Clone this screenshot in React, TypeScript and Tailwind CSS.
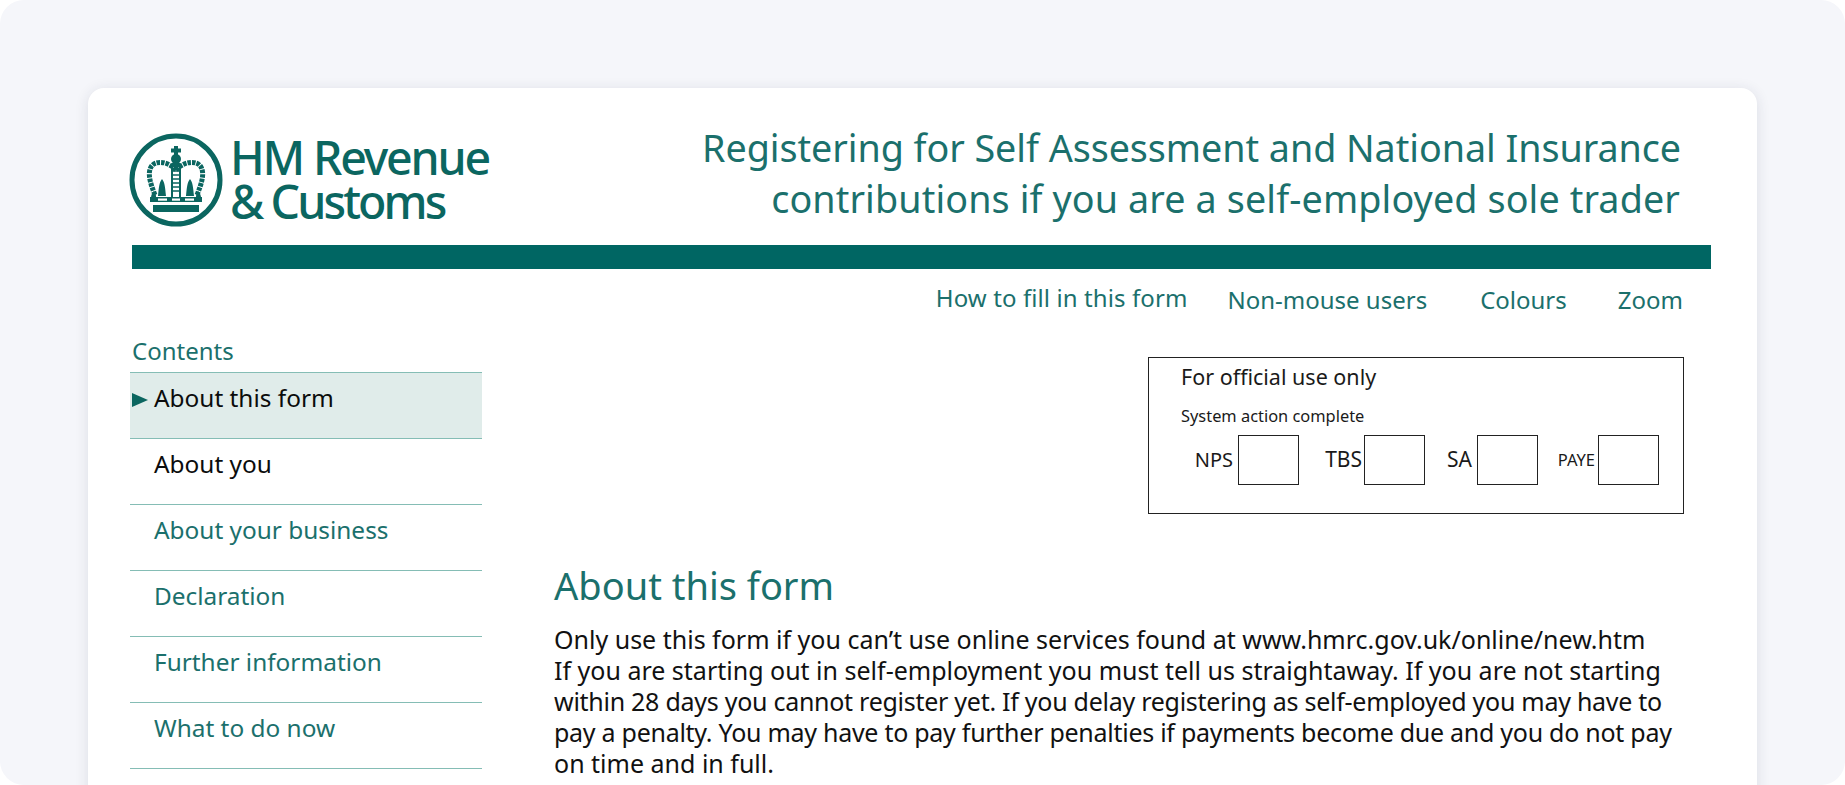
const navItems = [
  { label: "About this form", cls: "text-[#0b0c0c] bg-[#e0ecea]", active: true },
  { label: "About you", cls: "text-[#0b0c0c]" },
  { label: "About your business", cls: "text-[#1b706c]" },
  { label: "Declaration", cls: "text-[#1b706c]" },
  { label: "Further information", cls: "text-[#1b706c]" },
  { label: "What to do now", cls: "text-[#1b706c]" },
]

function OfficeBox({ label, className, labelClass }: { label: string, className?: string, labelClass: string }) {
  return <div className={`flex items-center justify-end ${className ?? ""}`}>
    <span className={labelClass}>{label}</span>
    <div className="w-[61px] h-[50px] flex-none border border-[#222]" />
  </div>
}

function Crown() {
  return <svg viewBox="0 0 94 94" className="w-[94px] h-[94px] flex-none mt-[1px]">
    <circle cx="47" cy="47" r="44" fill="none" stroke="#0b6660" strokeWidth="5" />
    <g fill="none" stroke="#0b6660">
      <path d="M47 37C39 28 26 27 22 34C18 41 22 52 26 62" strokeWidth="5" strokeDasharray="3.5 1" />
      <path d="M47 37C55 28 68 27 72 34C76 41 72 52 68 62" strokeWidth="5" strokeDasharray="3.5 1" />
      <path d="M43 33V64M51 33V64" strokeWidth="2" />
      <path d="M43 38H51M43 42H51M43 46H51M43 50H51M43 54H51M43 58H51" strokeWidth="1.6" />
    </g>
    <g fill="#0b6660">
      <circle cx="47" cy="26" r="5" />
      <rect x="45" y="13" width="4" height="10" />
      <rect x="42" y="15.5" width="10" height="4" />
      <rect x="43" y="30" width="8" height="4" />
      <path d="M33 46C36 50 36 54 37 63H29C30 54 30 50 33 46Z" />
      <path d="M61 46C64 50 64 54 65 63H57C58 54 58 50 61 46Z" />
      <path d="M25 58C27 60 27 62 27 65H22C22 62 23 60 25 58Z" />
      <path d="M69 58C71 60 72 62 72 65H67C67 62 67 60 69 58Z" />
      <rect x="21" y="64" width="52" height="5" />
      <path d="M24 72H70V79H24Z" />
    </g>
    <g fill="#ffffff">
      <rect x="29" y="65.5" width="9" height="2.2" />
      <rect x="43" y="65.5" width="8" height="2.2" />
      <rect x="56" y="65.5" width="9" height="2.2" />
    </g>
  </svg>
}

export default function App() {
  return <div className="bg-white">
    <div className="h-[785px] overflow-hidden rounded-3xl bg-[#f5f6fa] pt-[88px] px-[88px] font-['Noto_Sans',sans-serif]">
      <div className="h-[760px] rounded-2xl bg-white shadow-[0_2px_14px_rgba(30,40,70,0.12)] pl-[44px] pr-[46px] pt-[44px]">
        <header className="flex justify-between h-[113px]">
          <div className="flex gap-[7px] -ml-[3px]">
            <Crown />
            <div className="text-[#0b6660] text-[46.5px] leading-[44px] font-medium tracking-[-2.2px] pt-[3px]">
              <div>HM Revenue</div>
              <div className="tracking-[-2.9px]">&amp; Customs</div>
            </div>
          </div>
          <h1 className="text-[#1b706c] text-right text-[37.7px] leading-[50.5px] pr-[30px] -mt-[9px]">
            <div className="tracking-[-0.05px]">Registering for Self Assessment and National Insurance</div>
            <div className="tracking-[0.12px] pr-[1px]">contributions if you are a self-employed sole trader</div>
          </h1>
        </header>
        <div className="h-[24px] bg-[#006663]" />
        <div className="flex justify-end text-[#1b706c] text-[24px] leading-[30px] pr-[28px] pt-[16px]">
          <span className="mr-[40px] -mt-[2px] tracking-[0.1px]">How to fill in this form</span>
          <span className="mr-[53px]">Non-mouse users</span>
          <span className="mr-[51px]">Colours</span>
          <span>Zoom</span>
        </div>
        <div className="flex mt-[5px]">
          <aside className="w-[352px] -ml-[2px] flex-none pt-[16px]">
            <div className="text-[#1b706c] text-[24px] leading-[30px] pl-[2px] pb-[6px]">Contents</div>
            <ul className="border-t border-[#85bdb5]">
              {navItems.map(item => <li key={item.label} className={`relative h-[66px] border-b border-[#85bdb5] pl-[24px] pt-[8px] text-[24.4px] leading-[34px] ${item.cls}`}>
                {item.active && <span className="absolute left-[2px] top-[20px] w-0 h-0 border-y-[7px] border-y-transparent border-l-[16px] border-l-[#0b6660]" />}
                {item.label}
              </li>)}
            </ul>
          </aside>
          <main className="flex-1 pl-[72px] pt-[37px]">
            <div className="flex justify-end pr-[27px]">
              <div className="w-[536px] h-[157px] border border-[#222] pl-[32px] pt-[4px] text-[#1a1a1a]">
                <div className="text-[21.5px] leading-[30px]">For official use only</div>
                <div className="text-[16.4px] leading-[20px] mt-[14px]">System action complete</div>
                <div className="flex pr-[24px] mt-[9px] justify-end text-[20px]">
                  <OfficeBox label="NPS" labelClass="mr-[5px]" />
                  <OfficeBox label="TBS" labelClass="mr-[2px] text-[21px]" className="w-[126px]" />
                  <OfficeBox label="SA" labelClass="mr-[5px] text-[21px]" className="w-[113px]" />
                  <OfficeBox label="PAYE" labelClass="mr-[3px] text-[16.5px]" className="w-[121px]" />
                </div>
              </div>
            </div>
            <h2 className="text-[#1b706c] text-[38px] leading-[50px] mt-[46px]">About this form</h2>
            <div className="text-[#111] text-[25px] leading-[31px] mt-[14px] whitespace-nowrap">
              <div>Only use this form if you can’t use online services found at www.hmrc.gov.uk/online/new.htm</div>
              <div>If you are starting out in self-employment you must tell us straightaway. If you are not starting</div>
              <div className="tracking-[-0.27px]">within 28 days you cannot register yet. If you delay registering as self-employed you may have to</div>
              <div className="tracking-[-0.27px]">pay a penalty. You may have to pay further penalties if payments become due and you do not pay</div>
              <div>on time and in full.</div>
            </div>
          </main>
        </div>
      </div>
    </div>
  </div>
}
